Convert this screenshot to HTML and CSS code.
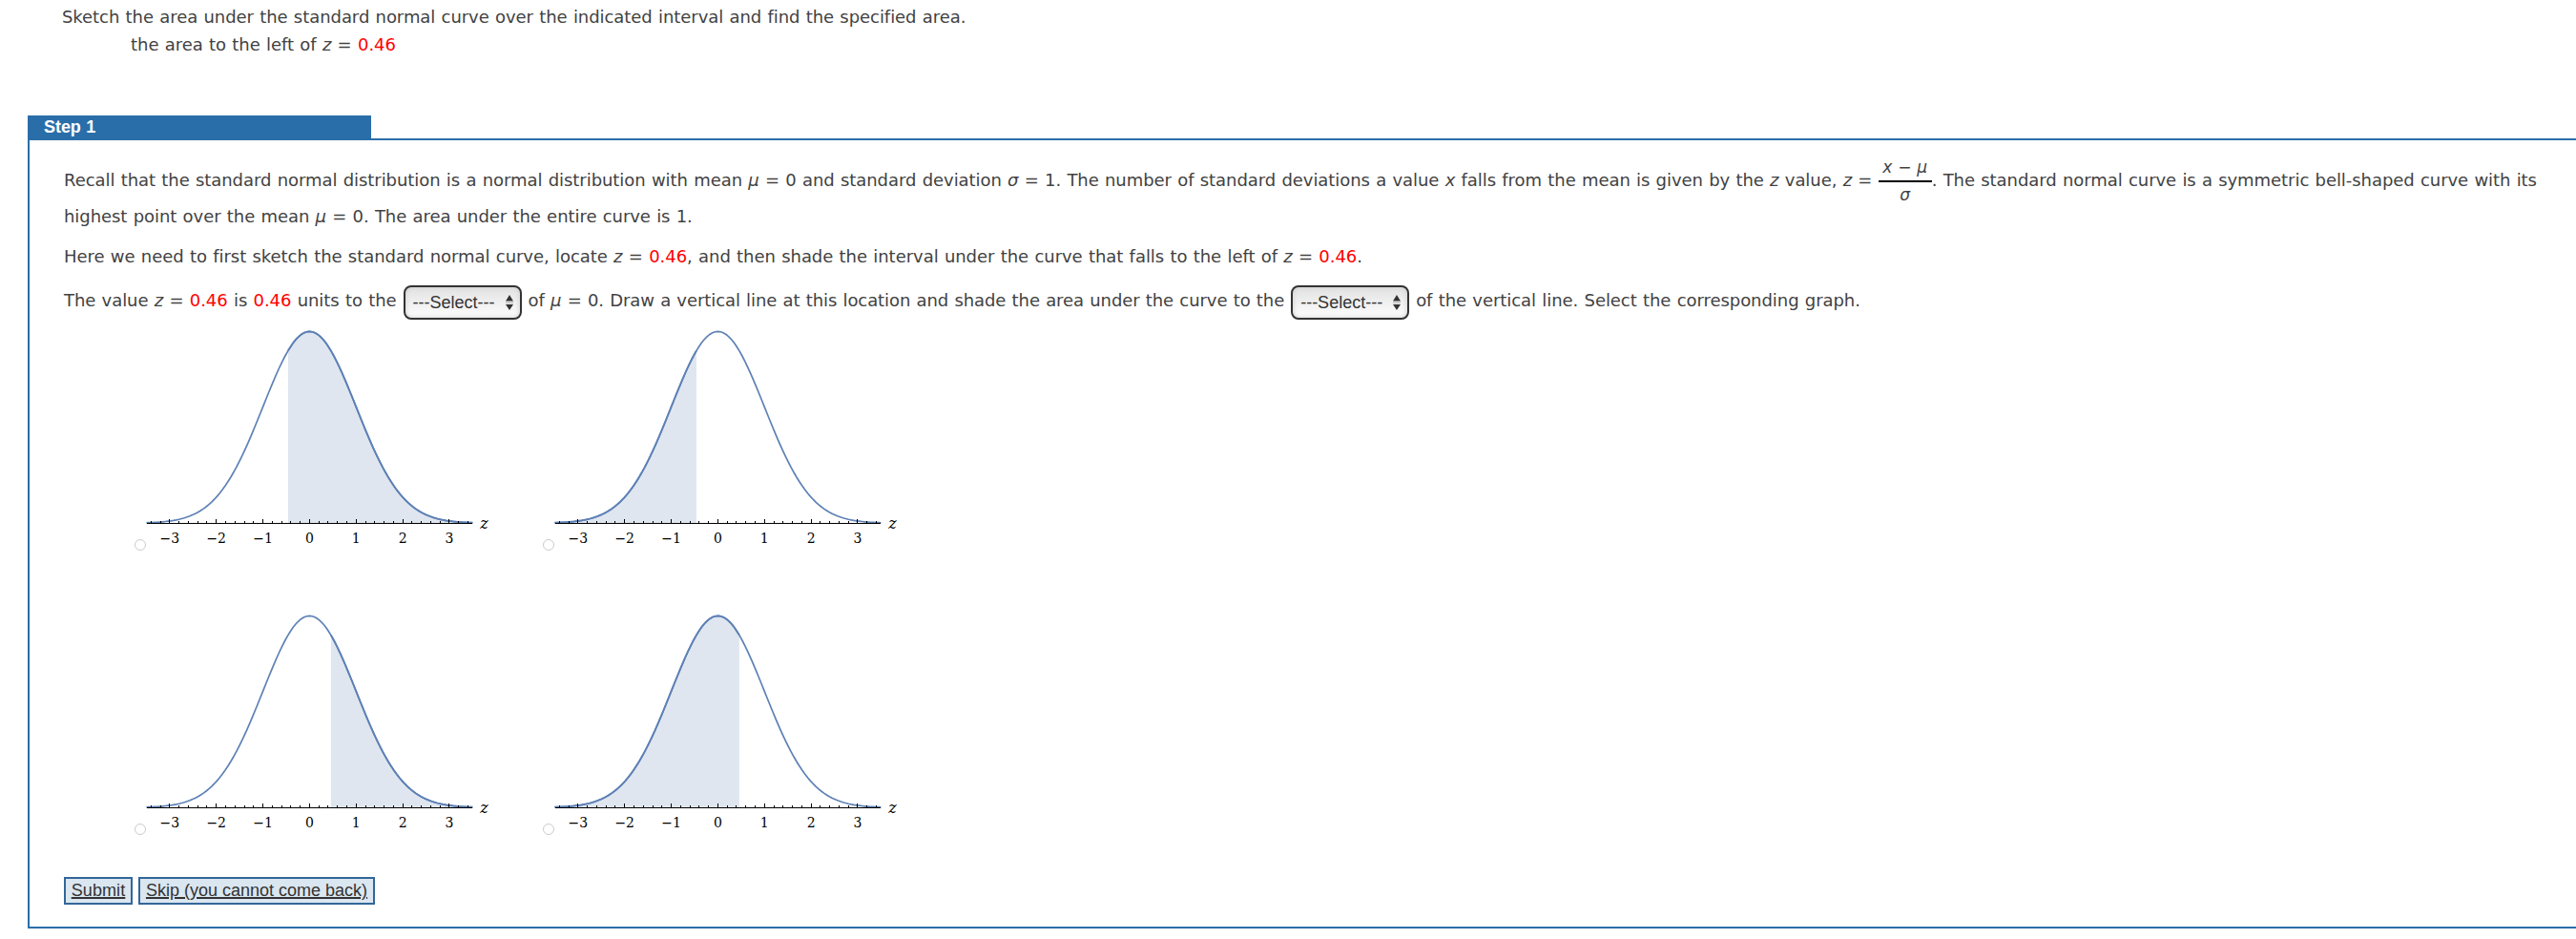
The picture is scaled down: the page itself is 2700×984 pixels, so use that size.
FILE: index.html
```html
<!DOCTYPE html>
<html lang="en">
<head>
    <meta charset="UTF-8">
    <title>Standard Normal Curve</title>
    <link rel="stylesheet" href="styles.css">
</head>
<body>
    <div class="question">
        <p class="q-line">Sketch the area under the standard normal curve over the indicated interval and find the specified area.</p>
        <p class="q-line indent">the area to the left of <i>z</i> = <span class="red">0.46</span></p>
    </div>

    <div class="step-tab">Step 1</div>
    <div class="step">
        <p class="recall">Recall that the standard normal distribution is a normal distribution with mean <i>μ</i> = 0 and standard deviation <i>σ</i> = 1. The number of standard deviations a value <i>x</i> falls from the mean is given by the <i>z</i> value, <i>z</i> = <span class="frac"><span class="num"><i>x</i> − <i>μ</i></span><span class="den"><i>σ</i></span></span>. The standard normal curve is a symmetric bell-shaped curve with its<br>highest point over the mean <i>μ</i> = 0. The area under the entire curve is 1.</p>
        <p class="here">Here we need to first sketch the standard normal curve, locate <i>z</i> = <span class="red">0.46</span>, and then shade the interval under the curve that falls to the left of <i>z</i> = <span class="red">0.46</span>.</p>
        <div class="fill">
            <span>The value <i>z</i> = <span class="red">0.46</span> is <span class="red">0.46</span> units to the</span>
            <div class="select">---Select---
                <svg width="10" height="18" viewBox="0 0 10 18"><path d="M5 1L9 7.5H1zM5 17L9 11H1z" fill="#333"/><path d="M1 9.2H9" stroke="#aaa"/></svg>
            </div>
            <span class="tight">of <i>μ</i> = 0. Draw a vertical line at this location and shade the area under the curve to the</span>
            <div class="select">---Select---
                <svg width="10" height="18" viewBox="0 0 10 18"><path d="M5 1L9 7.5H1zM5 17L9 11H1z" fill="#333"/><path d="M1 9.2H9" stroke="#aaa"/></svg>
            </div>
            <span>of the vertical line. Select the corresponding graph.</span>
        </div>

        <div class="graphs">
            <div class="choice"><span class="radio"></span><svg class="plot" data-from="-0.46" data-to="3.5"></svg></div>
            <div class="choice"><span class="radio"></span><svg class="plot" data-from="-3.5" data-to="-0.46"></svg></div>
            <div class="choice"><span class="radio"></span><svg class="plot" data-from="0.46" data-to="3.5"></svg></div>
            <div class="choice"><span class="radio"></span><svg class="plot" data-from="-3.5" data-to="0.46"></svg></div>
        </div>

        <div class="buttons">
            <button class="submit">Submit</button>
            <button class="skip">Skip (you cannot come back)</button>
        </div>
    </div>

    <script src="plots.js"></script>
</body>
</html>
```
FILE: styles.css
```css
body {
    margin: 0;
    padding: 4px 0 0 29px;
    background-color: white;
    color: #424242;
    font-family: "DejaVu Sans", Verdana, sans-serif;
    font-size: 18px;
    letter-spacing: -0.055px;
    word-spacing: 0.62px;
    overflow: hidden;
    white-space: nowrap;
}
p {
    margin: 0;
}
.question {
    height: 117px;
    padding-left: 36px;
}
.q-line {
    line-height: 28px;
}
.indent {
    padding: 1px 0 0 72px;
    letter-spacing: -0.04px;
}
.red {
    color: red;
}
.step-tab {
    box-sizing: border-box;
    width: 360px;
    height: 24px;
    padding-left: 17px;
    background-color: #2a6ea9;
    color: white;
    font: bold 18px/24px "Liberation Sans", Arial, sans-serif;
}
.step {
    box-sizing: border-box;
    width: 2680px;
    height: 828px;
    padding: 23px 0 0 36px;
    border: 2px solid #2a6ea9;
}
.recall {
    line-height: 38px;
}
.here {
    margin-top: 9px;
    line-height: 28px;
    letter-spacing: -0.042px;
}
.frac {
    display: inline-flex;
    flex-direction: column;
    width: 56px;
    margin: -6px 0 -7px;
    line-height: 22px;
    font-size: 17px;
    text-align: center;
    vertical-align: 14px;
}
.num {
    padding-bottom: 3px;
    border-bottom: 2px solid black;
}
.den {
    margin-top: 2px;
}
.fill {
    display: flex;
    gap: 7px;
    height: 36px;
    margin-top: 16px;
    line-height: 32px;
}
.tight {
    letter-spacing: -0.08px;
}
.select {
    display: flex;
    justify-content: space-between;
    align-items: center;
    box-sizing: border-box;
    width: 124px;
    height: 36px;
    padding: 0 6px 0 8px;
    border: 2px solid #333;
    border-radius: 8px;
    background: linear-gradient(#e2e2e2, #fdfdfd);
    box-shadow: inset 0 0 5px #ccc;
    color: #333;
    font-family: "Liberation Sans", Arial, sans-serif;
    letter-spacing: 0;
}
.graphs {
    display: grid;
    grid-template-columns: 428px 428px;
    grid-template-rows: 243px 243px;
    row-gap: 55px;
    padding-left: 74px;
}
.choice {
    display: flex;
    align-items: flex-end;
}
.radio {
    box-sizing: border-box;
    width: 12px;
    height: 12px;
    margin-bottom: 1px;
    border: 1px solid #ccc;
    border-radius: 50%;
}
.plot {
    width: 370px;
    height: 243px;
}
.plot text {
    fill: black;
    font-family: "DejaVu Serif", serif;
    font-size: 14px;
    text-anchor: middle;
}
.plot .axis-name {
    font-size: 16px;
    font-style: italic;
}
.shade {
    fill: #dfe6f0;
}
.curve {
    fill: none;
    stroke: #5e81b5;
    stroke-width: 1.7;
}
.curve.bold {
    stroke-width: 1.8;
}
.axis {
    stroke: black;
    stroke-width: 1;
    shape-rendering: crispEdges;
}
.buttons {
    display: flex;
    gap: 6px;
    margin-top: 43px;
}
.buttons button {
    box-sizing: border-box;
    height: 29px;
    padding: 0;
    border: 2px solid #336699;
    background-color: #dae6f0;
    color: #333;
    font: 18px/25px "Liberation Sans", Arial, sans-serif;
    text-decoration: underline;
    text-decoration-thickness: 2px;
}
.submit {
    width: 72px;
    letter-spacing: 0.1px;
}
.skip {
    width: 248px;
}
```
FILE: plots.js
```js
const X0 = 171.4, UNIT = 48.85, Y0 = 213.2, PEAK = 200.8;

function points(from, to) {
    const pts = [];
    const n = 120;
    for (let i = 0; i <= n; i++) {
        const z = from + (to - from) * i / n;
        pts.push((X0 + z * UNIT).toFixed(2) + "," + (Y0 - PEAK * Math.exp(-z * z / 2)).toFixed(2));
    }
    return pts.join(" ");
}

document.querySelectorAll(".plot").forEach(svg => {
    const from = parseFloat(svg.dataset.from);
    const to = parseFloat(svg.dataset.to);
    const left = X0 + from * UNIT, right = X0 + to * UNIT;
    let out = `<polygon class="shade" points="${left},${Y0} ${points(from, to)} ${right},${Y0}"/>`;
    out += `<polyline class="curve" points="${points(-3.5, 3.5)}"/>`;
    out += `<polyline class="curve bold" points="${points(from, to)}"/>`;
    out += `<path class="axis" d="M0.5 213.5H342"/>`;

    // minor tick every 0.2, major on whole numbers
    for (let i = -17; i <= 17; i++) {
        const x = Math.floor(X0 + i * UNIT / 5) + 0.5;
        out += `<path class="axis" d="M${x} 213V${i % 5 === 0 ? 209 : 211}"/>`;
    }
    for (let z = -3; z <= 3; z++) {
        out += `<text x="${X0 + z * UNIT}" y="233.5">${z < 0 ? "−" + -z : z}</text>`;
    }
    out += `<text class="axis-name" x="354.5" y="219">z</text>`;
    svg.innerHTML = out;
});
```
